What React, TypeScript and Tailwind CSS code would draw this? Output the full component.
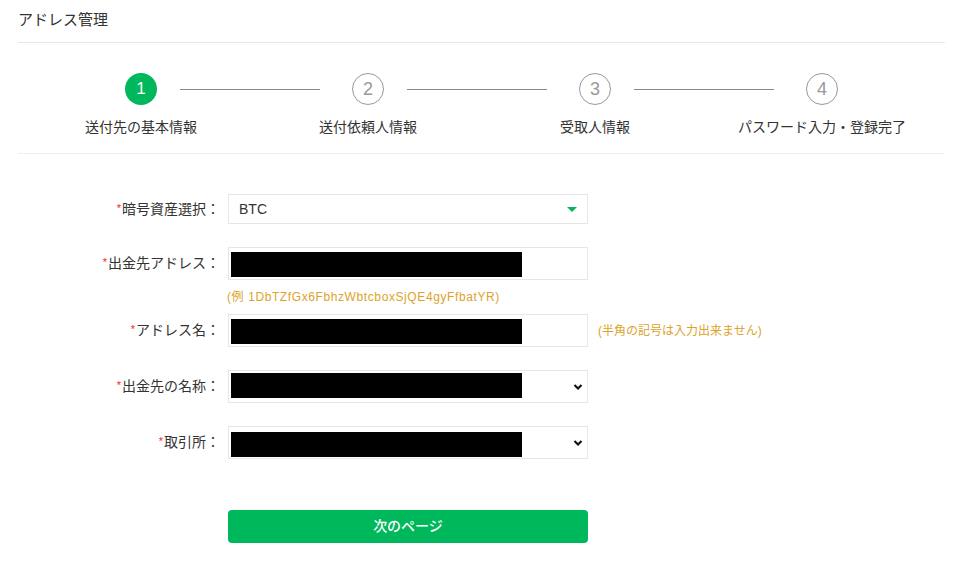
const font = { fontFamily: '"Liberation Sans", "Noto Sans CJK JP", "Noto Sans", sans-serif' };

const steps = ["送付先の基本情報", "送付依頼人情報", "受取人情報", "パスワード入力・登録完了"];

function Label({ text }: { text: string }) {
  return (
    <div className="w-[202px] shrink-0 text-right text-[14px] leading-[20px] text-[#333]">
      <span className="text-[#f5222d] text-[11px] relative top-[-2px] mr-[1px]">*</span>
      {text}：
    </div>
  );
}

function Chevron() {
  return (
    <svg width="10" height="7" viewBox="0 0 10 7" className="absolute right-[4px] top-1/2 -translate-y-1/2">
      <path d="M1.5 1.5 L5 5 L8.5 1.5" fill="none" stroke="#111" strokeWidth="2.2" />
    </svg>
  );
}

function Redacted({ top, select }: { top: string; select?: boolean }) {
  return (
    <div className="relative w-[360px] h-[33px] border border-[#e6e6e6] bg-white shrink-0">
      <div className={`absolute left-[2px] ${top} w-[291px] h-[25px] bg-black`}></div>
      {select && <Chevron />}
    </div>
  );
}

export default function App() {
  return (
    <div className="w-[959px] h-[576px] bg-white pl-[18px] pr-[14px]" style={font}>
      <div className="pt-[10px] pb-[13px] border-b border-[#e8e8e8] text-[15px] leading-[19px] text-[#333]">
        アドレス管理
      </div>

      {/* steps */}
      <div className="border-b border-[#efefef] pt-[30px] pb-[16px]">
        <div className="flex ml-[9.5px]">
          {steps.map((s, i) => (
            <div key={s} className="relative w-[227px] flex flex-col items-center">
              {i === 0 ? (
                <div className="w-[32px] h-[32px] rounded-full bg-[#00b85c] text-white flex items-center justify-center text-[17px] font-medium">
                  1
                </div>
              ) : (
                <div className="w-[32px] h-[32px] rounded-full border border-[#999] text-[#999] flex items-center justify-center text-[18px]">
                  {i + 1}
                </div>
              )}
              {i < 3 && (
                <div className="absolute top-[16px] left-[152.5px] w-[140px] h-px bg-[#888]"></div>
              )}
              <div className="mt-[12px] text-[14px] leading-[20px] text-[#333] whitespace-nowrap">{s}</div>
            </div>
          ))}
        </div>
      </div>

      {/* form */}
      <div className="pt-[40px]">
        <div className="flex items-center gap-[8px]">
          <Label text="暗号資産選択" />
          <div className="relative w-[360px] h-[30px] border border-[#e6e6e6] flex items-center px-[10px] text-[14px] text-[#333]">
            <span>BTC</span>
            <div className="absolute right-[10px] top-[12px] w-0 h-0 border-l-[5px] border-r-[5px] border-t-[5px] border-l-transparent border-r-transparent border-t-[#00b85c]"></div>
          </div>
        </div>

        <div className="flex items-center gap-[8px] mt-[23px]">
          <Label text="出金先アドレス" />
          <Redacted top="top-[4px]" />
        </div>
        <div className="ml-[209px] mt-[9px] text-[12px] leading-[17px] tracking-[0.6px] text-[#dca32b]">
          (例 1DbTZfGx6FbhzWbtcboxSjQE4gyFfbatYR)
        </div>

        <div className="flex items-center gap-[8px] mt-[8px]">
          <Label text="アドレス名" />
          <Redacted top="top-[4px]" />
          <span className="ml-[2px] text-[12px] text-[#dca32b]">(半角の記号は入力出来ません)</span>
        </div>

        <div className="flex items-center gap-[8px] mt-[23px]">
          <Label text="出金先の名称" />
          <Redacted top="top-[2px]" select />
        </div>

        <div className="flex items-center gap-[8px] mt-[23px]">
          <Label text="取引所" />
          <Redacted top="top-[5px]" select />
        </div>

        <div className="ml-[210px] mt-[51px] w-[360px] h-[33px] rounded-[4px] bg-[#00b85c] text-white text-[14px] font-medium flex items-center justify-center">
          次のページ
        </div>
      </div>
    </div>
  );
}
